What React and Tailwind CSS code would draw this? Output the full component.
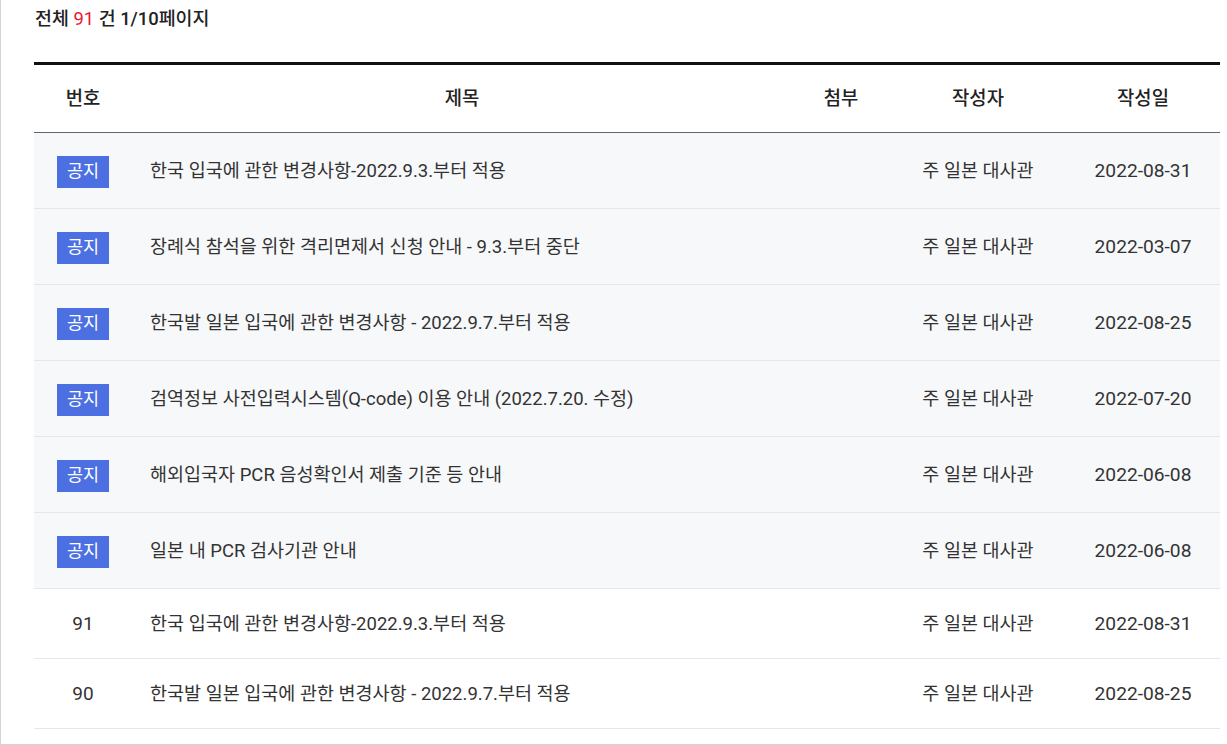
export default function App() {
  const notices = [
    ["한국 입국에 관한 변경사항-2022.9.3.부터 적용", "2022-08-31"],
    ["장례식 참석을 위한 격리면제서 신청 안내 - 9.3.부터 중단", "2022-03-07"],
    ["한국발 일본 입국에 관한 변경사항 - 2022.9.7.부터 적용", "2022-08-25"],
    ["검역정보 사전입력시스템(Q-code) 이용 안내 (2022.7.20. 수정)", "2022-07-20"],
    ["해외입국자 PCR 음성확인서 제출 기준 등 안내", "2022-06-08"],
    ["일본 내 PCR 검사기관 안내", "2022-06-08"],
  ];
  const rows = [
    ["91", "한국 입국에 관한 변경사항-2022.9.3.부터 적용", "2022-08-31"],
    ["90", "한국발 일본 입국에 관한 변경사항 - 2022.9.7.부터 적용", "2022-08-25"],
  ];
  return (
    <div
      className="w-[1227px] h-[745px] overflow-hidden bg-white border-l border-b border-[#d4d4d4]"
      style={{ fontFamily: "Roboto, 'Noto Sans CJK KR', sans-serif" }}
    >
      <div className="pl-[33px] pr-[7px]">
        <div className="pt-[7px] h-[62px] text-[18.4px] font-medium text-[#222] leading-[24px] pl-[1px]">
          전체 <span className="text-[#e8172f] font-normal">91</span> 건 1/10페이지
        </div>
        <div className="border-t-[3px] border-[#111]">
          <div className="flex h-[68px] items-center border-b border-[#666] text-[18.8px] font-medium text-[#222] pt-[2px]">
            <div className="w-[98px] text-center">번호</div>
            <div className="w-[660px] text-center">제목</div>
            <div className="w-[98px] text-center">첨부</div>
            <div className="w-[176px] text-center">작성자</div>
            <div className="flex-1 text-center">작성일</div>
          </div>
          {notices.map(([t, d], i) => (
            <div
              key={i}
              className="flex h-[76px] items-center bg-[#f7f8fa] border-b border-[#e6e7ea] text-[18.5px] text-[#333] pt-[2px]"
            >
              <div className="w-[98px] flex justify-center">
                <span className="w-[52px] h-[32px] flex items-center justify-center bg-[#4c6fe2] text-white text-[17.5px]">
                  공지
                </span>
              </div>
              <div className="w-[660px] pl-[18px]">{t}</div>
              <div className="w-[98px]"></div>
              <div className="w-[176px] text-center">주 일본 대사관</div>
              <div className="flex-1 text-center text-[19.2px]">{d}</div>
            </div>
          ))}
          {rows.map(([n, t, d], i) => (
            <div
              key={i}
              className="flex h-[70px] items-center border-b border-[#e6e7ea] text-[18.5px] text-[#333] pt-[2px]"
            >
              <div className="w-[98px] text-center text-[19px]">{n}</div>
              <div className="w-[660px] pl-[18px]">{t}</div>
              <div className="w-[98px]"></div>
              <div className="w-[176px] text-center">주 일본 대사관</div>
              <div className="flex-1 text-center text-[19.2px]">{d}</div>
            </div>
          ))}
        </div>
      </div>
    </div>
  );
}
